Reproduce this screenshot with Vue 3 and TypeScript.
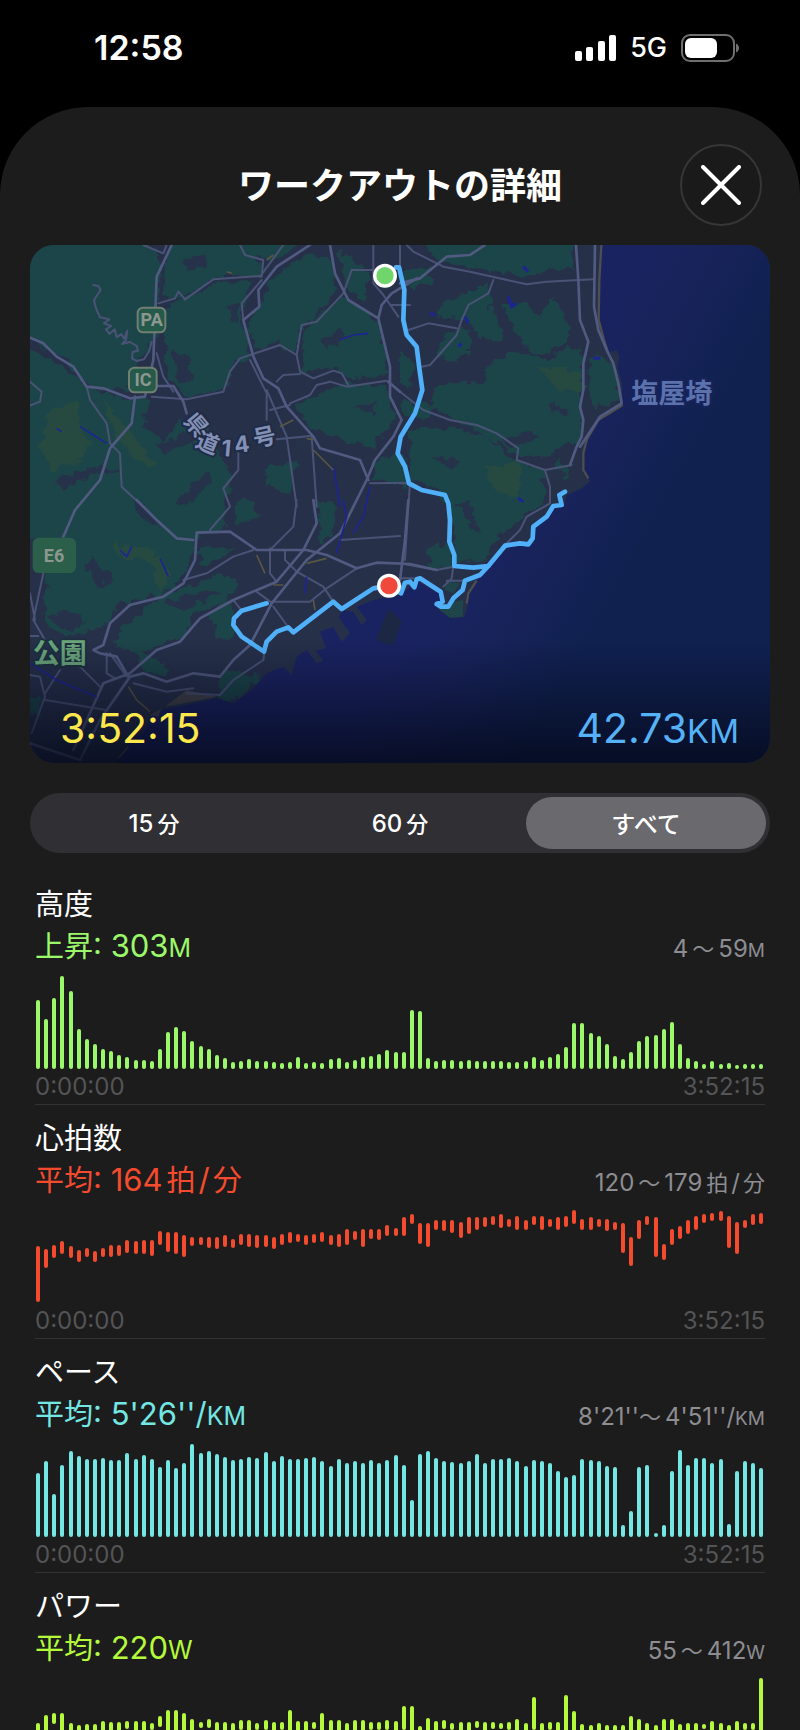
<script setup lang="ts">
import { ref } from 'vue'

type Kind = 'num' | 'jp' | 'wave' | 'slash' | 'unit'
type Run = [Kind, string]
type Span = [number, number]

interface Metric {
  id: string
  title: string
  color: string
  value: Run[]
  range: Run[]
  times: string[]
  ceil: number
  floor: number
  samples: (number | Span)[]
}

const periods = [
  { id: 'm15', runs: [['num', '15'], ['jp', '分']] as Run[] },
  { id: 'm60', runs: [['num', '60'], ['jp', '分']] as Run[] },
  { id: 'all', runs: [['num', 'すべて']] as Run[] },
]
const selected = ref('all')

// Samples are plot ordinates growing downwards; a single number reaches down to the floor.
const metrics: Metric[] = [
  {
    id: 'altitude',
    title: '高度',
    color: '#9bf86a',
    value: [['jp', '上昇'], ['num', ': 303'], ['unit', 'M']],
    range: [['num', '4'], ['jp', '〜'], ['num', '59'], ['unit', 'M']],
    times: ['0:00:00', '3:52:15'],
    ceil: 288,
    floor: 567,
    samples: [
      360, 417, 354, 288, 333, 447, 477, 492, 506, 514, 525, 531, 540, 541, 544, 507, 456, 440, 454, 482,
      498, 506, 524, 535, 547, 543, 537, 542, 542, 545, 550, 546, 532, 548, 547, 548, 538, 535, 545, 539,
      532, 528, 522, 511, 515, 515, 390, 393, 534, 543, 540, 540, 543, 540, 543, 544, 543, 544, 546, 545,
      542, 531, 540, 532, 521, 501, 429, 429, 459, 468, 492, 529, 536, 517, 484, 468, 464, 446, 425, 492,
      534, 542, 552, 543, 553, 549, 556, 552, 552, 552,
    ],
  },
  {
    id: 'heart',
    title: '心拍数',
    color: '#f44b2f',
    value: [['jp', '平均'], ['num', ': 164'], ['jp', '拍'], ['slash', '/'], ['jp', '分']],
    range: [['num', '120'], ['jp', '〜'], ['num', '179'], ['jp', '拍'], ['slash', '/'], ['jp', '分']],
    times: ['0:00:00', '3:52:15'],
    ceil: 285,
    floor: 564,
    samples: [
      [393, 562], [403, 458], [389, 430], [379, 417], [393, 430], [406, 440], [398, 426], [407, 440],
      [398, 426], [389, 426], [389, 422], [375, 413], [379, 417], [375, 417], [375, 422], [348, 390],
      [352, 412], [352, 417], [361, 426], [366, 394], [366, 389], [366, 399], [366, 403], [361, 395],
      [371, 399], [356, 390], [356, 395], [361, 399], [361, 395], [366, 403], [356, 390], [352, 385],
      [357, 380], [361, 390], [357, 385], [351, 381], [361, 390], [357, 395], [343, 390], [348, 376],
      [343, 395], [343, 371], [343, 376], [330, 363], [339, 363], [307, 363], [297, 327], [324, 386],
      [324, 395], [316, 345], [316, 349], [316, 354], [320, 368], [307, 358], [307, 345], [307, 336],
      [303, 331], [297, 340], [311, 335], [302, 345], [316, 345], [302, 331], [302, 345], [311, 335],
      [307, 345], [302, 336], [285, 327], [311, 345], [307, 345], [311, 336], [311, 349], [320, 345],
      [325, 413], [366, 454], [316, 372], [303, 331], [307, 427], [388, 436], [343, 390], [334, 372],
      [316, 358], [302, 345], [297, 323], [293, 318], [288, 318], [303, 399], [320, 417], [316, 340],
      [297, 331], [293, 327],
    ],
  },
  {
    id: 'pace',
    title: 'ペース',
    color: '#73e7e3',
    value: [['jp', '平均'], ['num', ": 5'26''/"], ['unit', 'KM']],
    range: [['num', "8'21''"], ['wave', '〜'], ['num', "4'51''/"], ['unit', 'KM']],
    times: ['0:00:00', '3:52:15'],
    ceil: 294,
    floor: 573,
    samples: [
      381, 345, 444, 358, 315, 330, 339, 339, 337, 342, 342, 321, 339, 327, 339, 364, 342, 367, 350, 294,
      321, 315, 324, 333, 343, 339, 333, 336, 318, 345, 330, 339, 339, 335, 333, 345, 361, 340, 350, 346,
      350, 342, 351, 342, 327, 358, 461, 323, 315, 336, 346, 348, 350, 345, 324, 350, 339, 339, 337, 345,
      360, 342, 345, 351, 375, 393, 386, 340, 342, 345, 359, 364, 537, 495, 363, 356, 562, 537, 375, 312,
      358, 337, 336, 351, 339, 533, 375, 346, 351, 366,
    ],
  },
  {
    id: 'power',
    title: 'パワー',
    color: '#b5f93c',
    value: [['jp', '平均'], ['num', ': 220'], ['unit', 'W']],
    range: [['num', '55'], ['jp', '〜'], ['num', '412'], ['unit', 'W']],
    times: [],
    ceil: 996,
    floor: 1275,
    samples: [
      [1132, 1162], [1107, 1162], [1102, 1134], [1102, 1160], [1131, 1162], [1136, 1162], [1135, 1160],
      [1133, 1162], [1125, 1162], [1129, 1160], [1128, 1160], [1125, 1149], [1126, 1160], [1124, 1162],
      [1131, 1153], [1111, 1144], [1093, 1162], [1092, 1162], [1101, 1162], [1118, 1162], [1129, 1147],
      [1120, 1146], [1128, 1160], [1128, 1160], [1132, 1160], [1122, 1151], [1122, 1162], [1131, 1153],
      [1121, 1151], [1128, 1160], [1128, 1152], [1093, 1162], [1125, 1160], [1126, 1162], [1128, 1149],
      [1101, 1162], [1122, 1162], [1122, 1160], [1131, 1162], [1122, 1160], [1122, 1160], [1129, 1151],
      [1129, 1153], [1121, 1151], [1126, 1160], [1080, 1152], [1080, 1162], [1140, 1166], [1117, 1162],
      [1126, 1160], [1123, 1148], [1131, 1151], [1128, 1160], [1128, 1160], [1125, 1147], [1129, 1162],
      [1129, 1149], [1131, 1149], [1129, 1151], [1119, 1160], [1131, 1160], [1053, 1151], [1132, 1160],
      [1128, 1151], [1129, 1160], [1046, 1170], [1094, 1170], [1134, 1165], [1136, 1162], [1132, 1160],
      [1136, 1162], [1136, 1162], [1137, 1162], [1110, 1180], [1120, 1170], [1131, 1162], [1138, 1162],
      [1118, 1170], [1120, 1170], [1133, 1162], [1132, 1162], [1130, 1160], [1134, 1149], [1126, 1160],
      [1131, 1162], [1137, 1162], [1125, 1160], [1131, 1152], [1131, 1152], [996, 1170],
    ],
  },
]

function barStyle(m: Metric, s: number | Span) {
  const [top, bottom] = typeof s === 'number' ? [s, m.floor] : s
  const full = m.floor - m.ceil
  return {
    top: `${((top - m.ceil) / full) * 100}%`,
    height: `${((bottom - top) / full) * 100}%`,
  }
}
</script>

<template>
  <div class="screen">
    <div class="status">
      <time class="clock">12:58</time>
      <div class="status-right">
        <svg class="signal" viewBox="0 0 42 26" aria-label="電波強度">
          <rect x="0" y="16" width="7" height="10" rx="2" />
          <rect x="11" y="12" width="7" height="14" rx="2" />
          <rect x="23" y="6" width="7" height="20" rx="2" />
          <rect x="34" y="0" width="7" height="26" rx="2" />
        </svg>
        <span class="network">5G</span>
        <svg class="battery" viewBox="0 0 58 28" aria-label="バッテリー">
          <rect x="1" y="1" width="52" height="26" rx="8" fill="none" stroke="#6f6f6f" stroke-width="2" />
          <rect x="4" y="4" width="32" height="20" rx="6" fill="#fff" />
          <path d="M55 9.5 Q58 11 58 14 Q58 17 55 18.500Z" fill="#6f6f6f" />
        </svg>
      </div>
    </div>

    <main class="sheet">
      <header class="header">
        <h1>ワークアウトの詳細</h1>
        <button class="close" type="button" aria-label="閉じる">
          <svg viewBox="0 0 40 40"><path d="M2 2 38 38M38 2 2 38" /></svg>
        </button>
      </header>

      <section class="map">
        <svg class="map-art" viewBox="30 15 2220 1554" preserveAspectRatio="xMidYMid slice">
          <defs>
            <linearGradient id="sea" gradientUnits="userSpaceOnUse" x1="1330" y1="850" x2="1760" y2="1090">
              <stop offset="0" stop-color="#1a2361" />
              <stop offset=".45" stop-color="#18235b" />
              <stop offset="1" stop-color="#102150" />
            </linearGradient>
            <linearGradient id="shade" x1="0" y1="0" x2="0" y2="1">
              <stop offset="0" stop-color="#050a20" stop-opacity="0" />
              <stop offset="1" stop-color="#040819" stop-opacity=".8" />
            </linearGradient>
            <filter id="ragged" x="0" y="0" width="100%" height="100%">
              <feTurbulence type="fractalNoise" baseFrequency="0.035" numOctaves="3" seed="8" />
              <feDisplacementMap in="SourceGraphic" scale="38" xChannelSelector="R" yChannelSelector="G" />
            </filter>
          </defs>

          <rect width="2300" height="1600" fill="#263049" />

          <g filter="url(#ragged)">
            <g fill="#1f454a">
              <path d="M0 0H380L430 70 408 200 410 290 345 380 315 455 210 440 130 355 30 295H0Z" />
              <path d="M440 60 455 0H640L730 75 715 110 600 110 480 175 425 170Z" />
              <path d="M430 205 600 125 695 120 665 240 690 345 645 365 625 440 500 475 440 400Z" />
              <path d="M0 305 110 370 200 440 330 480 390 470 370 560 430 610 480 540 560 560 600 640 640 720 610 780 620 860 540 880 520 930 500 1000 430 1060 300 1090 250 1160 130 1190 70 1140 75 1060 90 900 0 890Z" />
              <path d="M760 110 870 40 930 50 950 150 880 240 835 270 825 340 770 310 700 330 685 240 730 180Z" />
              <path d="M850 270 970 170 1070 240 1105 400 990 420 940 385 850 400Z" />
              <path d="M860 480 960 430 1090 440 1130 530 1060 620 960 600 870 560 820 500Z" />
              <path d="M955 30 1050 100 1030 190 985 150ZM560 0H850L760 60 690 50Z" />
              <path d="M1200 0H1660V90L1600 85 1500 110 1350 80 1260 70Z" />
              <path d="M1270 190 1400 130 1420 190 1350 240 1250 230ZM1340 230 1420 200 1450 300 1380 290ZM1450 190 1520 180 1560 240 1600 170 1650 260 1640 310 1600 330 1550 350 1500 300Z" />
              <path d="M1400 380 1480 330 1560 360 1680 315 1690 400 1680 500 1690 590 1580 650 1500 650 1400 590 1230 500 1260 430 1390 430Z" />
              <path d="M1170 570 1300 560 1400 590 1480 660 1570 690 1580 790 1520 820 1420 900 1400 960 1310 970 1290 800 1240 740 1170 720Z" />
              <path d="M1720 350 1760 350 1790 400 1795 480 1720 500 1700 430ZM1270 280 1350 270 1350 340 1290 370 1250 340ZM1620 660 1650 690 1640 720 1600 700Z" />
              <path d="M540 920 640 930 590 960 540 980ZM300 1170 420 1070 600 1000 650 1030 620 1090 520 1120 490 1190 360 1240 280 1220ZM570 1120 635 1080 640 1200 590 1190Z" />
              <path d="M610 1290 720 1310 690 1340 640 1390 590 1370ZM890 790 945 790 940 880 900 910ZM640 790 700 780 720 830 650 850ZM350 1230 430 1270 440 1310 370 1290Z" />
              <path d="M1220 930 1290 900 1300 980 1230 980ZM1060 660 1150 640 1160 740 1060 720ZM740 680 830 660 810 760 740 740ZM0 1370H60V1430H0Z" />
              <path d="M1150 90 1230 80 1240 130 1160 140ZM1140 330 1190 370 1170 440 1140 430ZM1150 480 1250 500 1220 540 1150 530Z" />
            </g>
            <g fill="#263049">
              <path d="M410 620 520 570 530 600 430 640ZM100 720 220 680 300 690 200 715 130 750ZM470 780 560 700 580 720 500 800ZM210 940 250 980 280 1020 230 1040 200 980Z" />
              <path d="M480 60 560 40 560 70 500 100ZM450 330 500 350 520 420 480 430ZM430 1090 560 1050 600 1060 480 1110ZM850 640 820 590 900 600ZM900 300 960 270 980 290 920 330Z" />
              <path d="M1580 740 1640 700 1570 680ZM1440 600 1530 570 1560 590 1470 620ZM1590 480 1650 520 1600 520ZM1310 790 1350 780 1380 880 1350 860ZM1230 650 1320 660 1300 690Z" />
              <path d="M80 1130 140 1110 200 1140 150 1180ZM340 780 380 800 420 860 360 840ZM620 200 660 190 650 250ZM1000 500 1080 490 1060 520Z" />
            </g>
            <g fill="#28493f">
              <path d="M90 510 170 480 180 550 210 610 170 670 90 690 60 620ZM250 480 300 540 370 620 400 680 350 660 290 590Z" />
              <path d="M1560 380 1680 400 1690 450 1610 450ZM1400 680 1500 670 1500 770 1420 760ZM280 910 400 930 450 1010 420 1050 390 960 300 950Z" />
            </g>
          </g>

          <path fill="url(#sea)" d="M1745 0 1738 120 1736 240 1752 300 1765 340 1790 330 1798 350 1792 380 1806 430 1808 495 1770 525 1735 540 1700 600 1690 640 1690 700 1712 722 1685 745 1640 765 1632 795 1600 800 1580 835 1548 855 1540 912 1470 915 1410 980 1370 1022 1345 1060 1345 1092 1332 1132 1290 1133 1252 1105 1265 1065 1195 1025 1165 1045 1140 1065 1060 1080 1010 1100 1040 1140 1025 1155 1000 1115 970 1110 955 1130 990 1180 965 1205 940 1160 900 1175 918 1225 888 1232 910 1262 890 1270 860 1230 830 1250 815 1305 790 1280 740 1300 700 1345 640 1390 590 1375 500 1395 420 1410 395 1430 370 1480 330 1500 280 1580V1620H2300V0Z" />
          <path fill="#1f454a" d="M1268 1100 1300 1085 1330 1080 1328 1130 1290 1133 1256 1108ZM1280 1025 1320 1030 1300 1060 1275 1050Z" />
          <path fill="#1c2744" d="M1100 1120 1110 1108 1146 1145 1118 1218 1068 1200Z" />
          <path fill="none" stroke="#4e4e50" stroke-width="7" d="M1745 0 1738 120 1736 240 1752 300 1765 340M1808 495 1735 540 1700 600 1690 640 1690 690 1705 715M1370 1022 1345 1060 1340 1090" />
          <path fill="#4b4b4b" d="M435 1400 500 1350 590 1370 480 1392ZM390 1425 425 1405 415 1430Z" opacity=".8" />

          <g fill="none" stroke="#4a5376" stroke-width="6" stroke-linejoin="round" stroke-linecap="round">
            <path d="M220 135 235 138 242 150 222 180 228 205 240 232 268 238 252 250 274 258 258 268 268 282 284 268 290 292 304 282 312 296 322 272 318 300 306 312 330 306 350 318 354 332 338 336 336 355 350 363 372 358 388 332 395 305" />
            <path d="M370 15 430 40 440 15M415 190 465 175 475 155 495 178 580 118 720 108M660 15 675 45 730 60 725 110" />
            <path d="M725 120 665 190 670 240M790 15 720 110M395 470 500 478 610 455 630 395 660 355 780 315 830 345 840 395 880 415 940 392 965 400 985 435M770 425 790 405 840 402M830 345 845 255 890 245 970 160 995 90 1060 90" />
            <path d="M810 490 870 465 890 435 930 425 980 440 1100 422M1060 15V130L1090 165 1135 230M1115 195H1170M690 360 740 460V540M750 510 810 495M770 598 870 588M740 450 800 590 830 800" />
            <path d="M200 440 210 480 260 550 270 610 300 640 305 740 380 810M655 640 655 690 610 745 630 800 570 870M410 340 430 410 460 455M30 425 65 455 60 485 30 497" />
            <path d="M875 590 890 800M1050 730 1170 728M750 925 750 1000 770 1025M795 930 795 960 830 995 910 1040 940 1085M490 1020 560 1000 640 950 700 930M830 780 820 860 750 930" />
            <path d="M640 1080 660 1105M710 1055 750 1085 870 1085 920 1045 1010 985M760 1100 800 1155M500 1360 600 1365 640 1320 730 1260 735 1225M340 1330 440 1355 520 1345M30 1305 60 1310 75 1370 35 1480" />
            <path d="M75 1380 260 1410M75 1360 120 1290M180 1280 240 1340M70 1000 40 1140 75 1200M30 1060 45 1140M30 1188H55M270 1240 320 1310M260 1240 260 1300 285 1315" />
            <path d="M1160 15 1180 35 1270 80 1350 95 1520 133 1580 125 1720 118M1420 120 1405 160 1345 195 1325 240 1310 285 1230 375 1205 380M1165 270 1225 250 1310 265M1140 455 1210 510 1290 540 1370 555 1430 580 1495 625 1490 660 1575 690 1655 675" />
            <path d="M1575 690 1590 740 1590 790 1520 830 1500 870 1450 920M1140 730 1170 730 1165 800 1155 960M1140 970 1250 990 1300 980M1300 980 1295 1015 1270 1040M1140 1015 1180 1015M1140 15V80M960 900 1140 888M1280 1022H1330" />
          </g>
          <g fill="none" stroke="#515a80" stroke-width="8" stroke-linejoin="round" stroke-linecap="round">
            <path d="M30 293 70 310 110 350 160 380 200 440 250 445 330 475 375 470 400 360 410 110 455 15" />
            <path d="M345 470 335 550 270 625 240 720 165 810 130 890M405 438H460L490 485 500 520M870 15 770 80 715 150 718 200 670 240 700 350 730 415 775 445 800 500 880 590 900 625 1020 660 1045 720" />
            <path d="M930 15 945 100 985 180 1070 232M1190 115 1115 160 1085 195 1075 235 1110 380 1110 470 1145 540 1120 590 1065 660 1040 720 960 880 860 960 755 1090 690 1215 640 1260 600 1310 520 1300 440 1325 370 1300 330 1310 240 1440 180 1560" />
            <path d="M1140 130 1200 115 1280 50 1350 45 1395 15M880 780 890 850 850 930 770 1025 640 1080 540 1135 480 1205 410 1230 330 1300 250 1330 160 1530M350 780 410 840 470 895 520 900" />
            <path d="M530 878 525 960 490 1030 430 1070 330 1095 270 1150 250 1215 220 1230 240 1240 290 1250 325 1310M530 878 630 875 710 930 860 930 920 945 1010 985 1070 968 1170 972 1250 990M1105 425 1140 455" />
            <path d="M30 1510 180 1560M1668 15 1675 120 1680 240 1705 305 1690 370 1690 450 1680 500 1690 540 1685 590 1670 620 1650 675M1725 15 1722 200 1735 270 1760 330 1780 370 1795 430 1805 490 1740 530 1680 620" />
            <path d="M1165 780 1155 900 1140 1020" />
          </g>
          <g fill="none" stroke="#1d2494" stroke-width="5">
            <path d="M180 560 260 610M110 565 125 575M300 930 320 950 335 920M960 300 1000 285 1045 280M940 680 960 800M1050 740 1030 830 1000 880M420 955 445 1010M860 1010 855 1060M30 1270 110 1320 230 1370M970 780 980 830 950 940" />
            <path d="M1465 170 1475 200 1490 190M1510 80 1525 95M1335 230 1345 250M1315 320 1325 310M1720 355H1740M1230 220 1245 225M1495 775 1510 785" stroke-width="9" />
          </g>
          <g fill="none" stroke="#5a5740" stroke-width="5">
            <path d="M740 60 760 45M620 95 635 100M780 560 820 540M860 595 880 600M880 630 940 690M710 945 735 1000M860 970 920 955M760 1035 790 1035M880 1080 885 1110M295 1555 325 1520M325 1340 350 1380 390 1415" />
          </g>

          <path class="route" d="M1128 82 1137 82 1153 150 1150 240 1160 285 1190 320 1198 385 1207 450 1185 520 1142 590 1133 640 1155 680 1167 730 1205 750 1275 765 1285 790 1290 840 1288 905 1303 945 1303 978 1360 983 1405 978 1455 917 1500 910 1525 913 1538 895 1540 860 1580 830 1600 798 1625 795 1618 765 1635 755" />
          <path class="route" d="M1405 978 1380 1005 1335 1022 1328 1050 1300 1075 1285 1100 1262 1100 1250 1092 1268 1085 1262 1055 1200 1015 1190 1018 1183 1042 1170 1025 1155 1028 1143 1060 1107 1037 1060 1045 965 1107 940 1085 820 1177 805 1162 770 1175 740 1205 732 1235 665 1190 640 1155 642 1135 665 1112 740 1090" />
          <g stroke="#fff" stroke-width="10">
            <circle cx="1095" cy="107" r="31" fill="#70d66c" />
            <circle cx="1107" cy="1037" r="31" fill="#f0493b" />
          </g>

          <g class="badge">
            <rect x="353" y="203" width="83" height="74" rx="16" />
            <text x="395" y="259">PA</text>
            <rect x="327" y="383" width="83" height="74" rx="16" />
            <text x="369" y="438">IC</text>
            <rect class="plain" x="38" y="893" width="130" height="106" rx="18" />
            <text x="102" y="965">E6</text>
          </g>
          <text class="label road" x="488 522 602 646 705" y="544 619 647 640 622" rotate="50 22 5 -8 -12">県道14号</text>
          <text class="label cape" x="1834" y="489">塩屋埼</text>
          <text class="label park" x="38" y="1269">公園</text>
          <rect y="1200" width="2300" height="370" fill="url(#shade)" />
        </svg>
        <div class="totals">
          <span class="elapsed">3:52:15</span>
          <span class="distance">42.73<span class="unit">KM</span></span>
        </div>
      </section>

      <div class="segments" role="group" aria-label="表示期間">
        <button
          v-for="p in periods"
          :key="p.id"
          type="button"
          :class="{ active: selected === p.id }"
          :aria-pressed="selected === p.id"
          @click="selected = p.id"
        ><span v-for="(r, i) in p.runs" :key="i" :class="r[0]">{{ r[1] }}</span></button>
      </div>

      <section v-for="m in metrics" :key="m.id" class="metric">
        <h2>{{ m.title }}</h2>
        <div class="summary">
          <p class="value" :style="{ color: m.color }"><span v-for="(r, i) in m.value" :key="i" :class="r[0]">{{ r[1] }}</span></p>
          <p class="range"><span v-for="(r, i) in m.range" :key="i" :class="r[0]">{{ r[1] }}</span></p>
        </div>
        <div class="chart" :style="{ color: m.color }">
          <i v-for="(s, i) in m.samples" :key="i" class="bar" :style="barStyle(m, s)"></i>
        </div>
        <div v-if="m.times.length" class="times"><span v-for="t in m.times" :key="t">{{ t }}</span></div>
      </section>
    </main>
  </div>
</template>

<style>
body {
  margin: 0;
  background: #000;
}
</style>

<style scoped>
.screen {
  height: 100vh;
  overflow: hidden;
  display: flex;
  flex-direction: column;
  background: #000;
  color: #fff;
  font-family: Inter, 'Noto Sans CJK JP', sans-serif;
}
.status {
  flex: none;
  box-sizing: border-box;
  height: 107px;
  padding: 0 61px 12px 94px;
  display: flex;
  align-items: center;
  justify-content: space-between;
}
.clock {
  font-size: 34px;
  font-weight: 600;
}
.status-right {
  display: flex;
  align-items: center;
}
.signal {
  width: 42px;
  height: 26px;
  fill: #fff;
}
.network {
  margin: 0 14px 0 13px;
  font-size: 27px;
  font-weight: 500;
}
.battery {
  width: 58px;
  height: 28px;
}
.sheet {
  flex: 1;
  min-height: 0;
  border-radius: 88px 88px 0 0;
  background: #1c1c1c;
}
.header {
  display: grid;
  grid-template-columns: 82px 1fr 82px;
  align-items: center;
  padding: 37px 38px 19px;
}
h1 {
  grid-column: 2;
  margin: 0;
  padding-top: 2px;
  text-align: center;
  font-size: 36px;
  line-height: 48px;
  font-weight: 700;
}
.close {
  display: grid;
  place-items: center;
  width: 82px;
  height: 82px;
  padding: 0;
  border: 2px solid #363636;
  border-radius: 50%;
  background: #1a1a1a;
}
.close svg {
  width: 40px;
  height: 40px;
}
.close path {
  stroke: #fff;
  stroke-width: 4;
  stroke-linecap: round;
}
.map {
  position: relative;
  margin: 0 30px;
  border-radius: 24px;
  overflow: hidden;
}
.map-art {
  display: block;
  width: 100%;
}
.route {
  fill: none;
  stroke: #50b1fa;
  stroke-width: 14;
  stroke-linejoin: round;
  stroke-linecap: round;
}
.badge rect {
  fill: #25594a;
  stroke: #6f7f72;
  stroke-width: 6;
}
.badge .plain {
  fill: #2b5f49;
  stroke: none;
}
.badge text {
  fill: #8d9791;
  font-family: Roboto, sans-serif;
  font-size: 54px;
  font-weight: 700;
  text-anchor: middle;
}
.label {
  font-size: 68px;
  font-weight: 700;
  paint-order: stroke;
  stroke-width: 12;
  stroke-linejoin: round;
}
.road {
  fill: #8390b6;
  stroke: #202b46;
}
.cape {
  font-size: 81px;
  fill: #5b72ac;
  stroke: #17235a;
}
.park {
  font-size: 81px;
  fill: #6ba77b;
  stroke: #1d3040;
}
.totals {
  position: absolute;
  left: 30px;
  right: 31px;
  bottom: 8px;
  display: flex;
  justify-content: space-between;
  font-size: 41px;
  line-height: 48px;
}
.elapsed {
  color: #fde74c;
}
.distance {
  color: #55b2f7;
}
.distance .unit {
  font-size: 33px;
}
.segments {
  display: grid;
  grid-template-columns: repeat(3, 1fr);
  column-gap: 6px;
  margin: 30px 30px 18px;
  padding: 4px;
  border-radius: 30px;
  background: #302f34;
}
.segments button {
  height: 52px;
  padding: 0 0 2px;
  border: 0;
  border-radius: 26px;
  background: none;
  color: #fff;
  font-family: inherit;
  font-size: 24px;
  font-weight: 500;
}
.segments .active {
  background: #6a696e;
}
.segments .jp {
  font-size: 22px;
}
.num + .jp {
  margin-left: 4px;
}
.metric {
  margin: 0 35px;
  padding-top: 17px;
  border-bottom: 1px solid #333335;
}
h2 {
  margin: 0;
  font-size: 29px;
  line-height: 34px;
  font-weight: 400;
}
.summary {
  display: flex;
  justify-content: space-between;
  align-items: baseline;
  height: 48px;
  margin-bottom: 6px;
}
.summary p {
  margin: 0;
  line-height: 48px;
  white-space: pre;
}
.value {
  font-size: 31px;
}
.value .jp {
  font-size: 29px;
}
.value .unit {
  font-size: 25px;
}
.slash {
  margin: 0 3px;
}
.range {
  font-size: 24px;
  color: #8d8d92;
}
.range .jp,
.range .wave {
  font-size: 22px;
}
.range .jp + .num,
.range .wave + .num {
  margin-left: 4px;
}
.range .unit {
  font-size: 19px;
}
.chart {
  display: flex;
  justify-content: space-between;
  height: 93px;
  padding: 0 1px;
}
.bar {
  position: relative;
  width: 4px;
  border-radius: 2px;
  background: currentColor;
}
.times {
  display: flex;
  justify-content: space-between;
  font-size: 24px;
  line-height: 35px;
  color: #545456;
}
</style>
